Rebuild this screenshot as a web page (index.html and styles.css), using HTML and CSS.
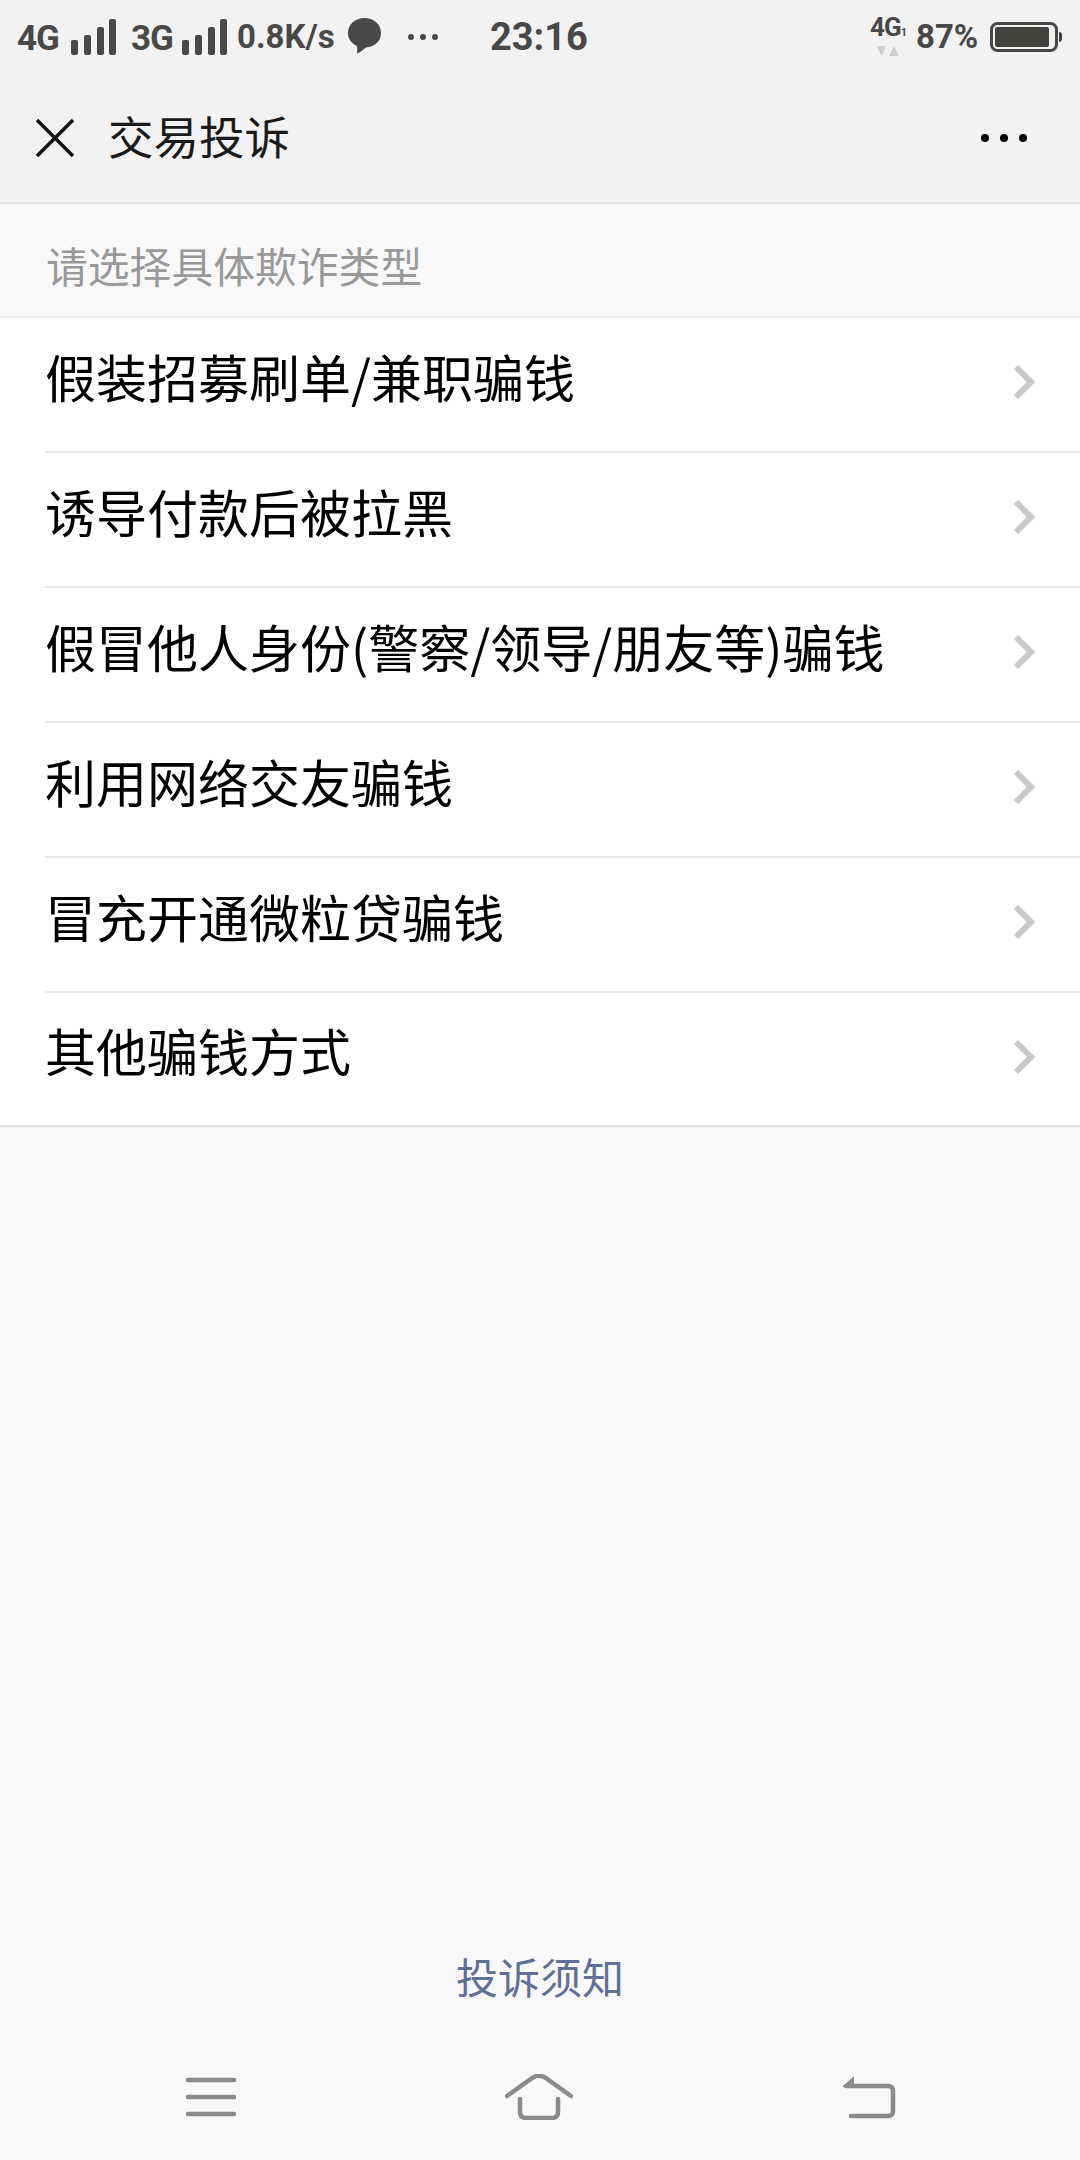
FILE: index.html
```html
<!DOCTYPE html>
<html lang="zh-CN">
<head>
    <meta charset="UTF-8">
    <meta name="viewport" content="width=device-width, initial-scale=1.0">
    <title>交易投诉</title>
    <link rel="stylesheet" href="styles.css">
</head>
<body>
<div class="page">

    <!-- 状态栏 + 标题栏 -->
    <header class="top">
        <div class="status">
            <div class="status-left">
                <span class="net">4G</span>
                <svg class="bars" width="45" height="36" viewBox="0 0 45 36"><rect x="0" y="21" width="7" height="15" rx="2"/><rect x="13" y="16" width="7" height="20" rx="2"/><rect x="26" y="8" width="7" height="28" rx="2"/><rect x="38" y="0" width="7" height="36" rx="2"/></svg>
                <span class="net net-3g">3G</span>
                <svg class="bars" width="45" height="36" viewBox="0 0 45 36"><rect x="0" y="21" width="7" height="15" rx="2"/><rect x="13" y="16" width="7" height="20" rx="2"/><rect x="26" y="8" width="7" height="28" rx="2"/><rect x="38" y="0" width="7" height="36" rx="2"/></svg>
                <span class="speed">0.8K/s</span>
                <svg class="bubble" width="33" height="36" viewBox="0 0 33 36"><path d="M16.500 0C26 0 33 6.500 33 15S26 29 18 29.500C15 32 12 34.500 9 35.500C9.500 33 9.500 30.500 9 28C3.500 25.500 0 21 0 15C0 6.500 7 0 16.500 0Z"/></svg>
                <svg class="more" width="32" height="8" viewBox="0 0 32 8"><circle cx="4" cy="4" r="3"/><circle cx="16" cy="4" r="3"/><circle cx="28" cy="4" r="3"/></svg>
            </div>
            <div class="clock">23:16</div>
            <div class="status-right">
                <div class="sim">
                    <span class="sim-name">4G<small>1</small></span>
                    <svg width="22" height="10" viewBox="0 0 22 10"><path class="tri" d="M0 0H9L4.500 10Z"/><path class="tri" d="M12 10H22L17 0Z"/></svg>
                </div>
                <span class="battery-pct">87%</span>
                <svg width="72" height="30" viewBox="0 0 72 30"><rect class="batt-case" x="1.500" y="1.500" width="65" height="27" rx="6"/><rect class="batt-fill" x="5" y="5" width="54" height="20" rx="2"/><path class="batt-fill" d="M69 10C71 10 72 11 72 13V17C72 19 71 20 69 20Z"/></svg>
            </div>
        </div>
        <div class="nav">
            <svg class="close" width="38" height="38" viewBox="0 0 38 38"><path d="M1 1L37 37M37 1L1 37"/></svg>
            <h1>交易投诉</h1>
            <svg class="menu-dots" width="46" height="8" viewBox="0 0 46 8"><circle cx="4" cy="4" r="4"/><circle cx="23" cy="4" r="4"/><circle cx="42" cy="4" r="4"/></svg>
        </div>
    </header>

    <div class="section-label">请选择具体欺诈类型</div>

    <!-- 欺诈类型列表 -->
    <ul class="list">
        <li><span>假装招募刷单/兼职骗钱</span><svg class="arrow" width="22" height="36" viewBox="0 0 22 36"><path d="M3 3L18 18L3 33"/></svg></li>
        <li><span>诱导付款后被拉黑</span><svg class="arrow" width="22" height="36" viewBox="0 0 22 36"><path d="M3 3L18 18L3 33"/></svg></li>
        <li><span>假冒他人身份(警察/领导/朋友等)骗钱</span><svg class="arrow" width="22" height="36" viewBox="0 0 22 36"><path d="M3 3L18 18L3 33"/></svg></li>
        <li><span>利用网络交友骗钱</span><svg class="arrow" width="22" height="36" viewBox="0 0 22 36"><path d="M3 3L18 18L3 33"/></svg></li>
        <li><span>冒充开通微粒贷骗钱</span><svg class="arrow" width="22" height="36" viewBox="0 0 22 36"><path d="M3 3L18 18L3 33"/></svg></li>
        <li><span>其他骗钱方式</span><svg class="arrow" width="22" height="36" viewBox="0 0 22 36"><path d="M3 3L18 18L3 33"/></svg></li>
    </ul>

    <div class="spacer"></div>
    <div class="notice">投诉须知</div>

    <!-- 底部导航键 -->
    <footer class="softkeys">
        <svg width="50" height="40" viewBox="0 0 50 40"><path d="M2 3H48M2 20H48M2 37H48"/></svg>
        <svg width="68" height="46" viewBox="0 0 68 46"><path d="M2 22L28 3.500Q34 0 40 3.500L66 22M15 25V38Q15 44 21 44H47Q53 44 53 38V25"/></svg>
        <svg width="54" height="44" viewBox="0 0 54 44"><path d="M4 11H46Q51 11 51 16V36Q51 41 46 41H9"/><path class="key-fill" d="M0 12L12 1V12Z"/></svg>
    </footer>

</div>
</body>
</html>
```

FILE: styles.css
```css
* { box-sizing: border-box; }
body { margin: 0; background-color: #f8f8f8; font-family: "Noto Sans CJK SC", "Noto Sans", sans-serif; color: #000; }
.page { display: flex; flex-direction: column; height: 2160px; overflow: hidden; }

/* 顶部 */
.top { background-color: #f2f2f2; border-bottom: 2px solid #e2e2e2; height: 204px; }
.status { display: flex; align-items: center; height: 74px; padding: 0 17px 0 17px; font-family: Roboto, "Liberation Sans", sans-serif; color: #484848; font-weight: 700; }
.status-left { display: flex; align-items: center; width: 473px; }
.net { font-size: 35px; width: 54px; letter-spacing: -1px; line-height: 36px; margin-top: 4px; }
.net-3g { margin-left: 15px; width: 51px; }
.bars { fill: #484848; }
.speed { font-size: 33px; margin-left: 10px; width: 111px; line-height: 36px; white-space: nowrap; }
.bubble { fill: #484848; margin-top: -3px; }
.more { fill: #484848; margin-left: 26px; }
.clock { font-size: 38px; width: 381px; line-height: 40px; }
.status-right { display: flex; align-items: center; }
.sim { display: flex; flex-direction: column; align-items: center; width: 34px; margin-right: 11px; margin-top: -4px; }
.sim-name { font-size: 26px; line-height: 26px; letter-spacing: -1px; white-space: nowrap; }
.sim-name small { font-size: 11px; }
.tri { fill: #cfcfcf; }
.battery-pct { font-size: 33px; width: 74px; line-height: 36px; }
.batt-case { fill: none; stroke: #484848; stroke-width: 3; }
.batt-fill { fill: #42433f; }

.nav { display: flex; align-items: center; height: 128px; padding: 0 53px 0 36px; }
.close { fill: none; stroke: #111; stroke-width: 3.5; }
.nav h1 { margin: -6px 0 0 34px; font-size: 45.5px; font-weight: 400; flex: 1; color: #1a1a1a; }
.menu-dots { fill: #000; }

/* 列表 */
.section-label { height: 114px; display: flex; align-items: center; padding: 10px 0 0 46px; font-size: 41.8px; color: #999; border-bottom: 2px solid #e8e8e8; }
.list { list-style: none; margin: 0; padding: 0 0 0 45px; background-color: #fff; border-bottom: 2px solid #e2e2e2; }
.list li { display: flex; align-items: center; justify-content: space-between; height: 135px; padding-right: 45px; font-size: 51px; border-bottom: 2px solid #e8e8e8; }
.list li span { margin-bottom: 18px; }
.list li:last-child { border-bottom: none; height: 132px; }
.arrow { fill: none; stroke: #c9c9c9; stroke-width: 6; margin-bottom: 5px; }

/* 底部 */
.spacer { flex: 1; }
.notice { text-align: center; font-size: 42px; color: #5f7096; margin-bottom: 68px; line-height: 56px; }
.softkeys { display: flex; justify-content: space-between; align-items: center; height: 88px; padding: 0 184px 38px 186px; }
.softkeys svg { fill: none; stroke: #8b8b8b; stroke-width: 4.5; stroke-linecap: round; }
.softkeys .key-fill { fill: #8b8b8b; stroke: none; }
```
